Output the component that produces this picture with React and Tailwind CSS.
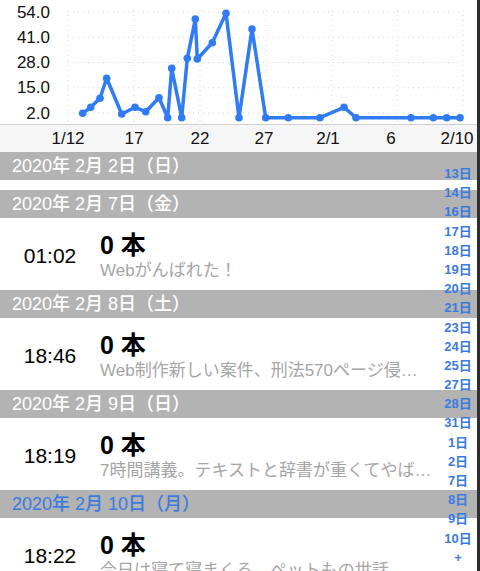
const BLUE = "#2f7cf4";

const points = [
  [82.7, 113.3], [90.7, 107.3], [100, 98.3], [106.7, 78.3], [121.7, 114],
  [135, 107.3], [145.7, 111.7], [159, 97.7], [167.7, 117.7], [171.7, 68.3],
  [181.7, 117.7], [187.3, 58.3], [195.3, 19], [197.3, 59], [212.3, 42.7],
  [226, 13.3], [239, 117.7], [252, 29], [265.7, 117.7], [288.3, 117.7],
  [320, 117.7], [344, 107.3], [356, 117.7], [411, 117.7], [433.3, 117.7],
  [446.7, 117.7], [460, 117.7],
];

const yTicks = [
  ["54.0", 12],
  ["41.0", 37.3],
  ["28.0", 62.5],
  ["15.0", 87.8],
  ["2.0", 113],
];

const xTicks = [
  ["1/12", 68],
  ["17", 134],
  ["22", 200],
  ["27", 264],
  ["2/1", 328],
  ["6", 391],
  ["2/10", 457],
];

const gridX = [68, 134, 200, 266, 332, 397, 463];

function Chart() {
  return (
    <svg width="477" height="152" className="block">
      <rect x="0" y="0" width="477" height="124" fill="#ffffff" />
      <rect x="0" y="124" width="477" height="28" fill="#f6f6f6" />
      <line x1="0" y1="124.5" x2="477" y2="124.5" stroke="#cfcfcf" strokeWidth="1" />
      {gridX.map((x) => (
        <line key={x} x1={x} y1="10" x2={x} y2="124" stroke="#d4d4d4" strokeWidth="1" strokeDasharray="1 4" />
      ))}
      {yTicks.map(([, y]) => (
        <line key={y} x1="68" y1={y} x2="463" y2={y} stroke="#d4d4d4" strokeWidth="1" strokeDasharray="1 4" />
      ))}
      {yTicks.map(([label, y]) => (
        <text key={label} x="50" y={y} textAnchor="end" dominantBaseline="central" fontSize="17" fill="#111">
          {label}
        </text>
      ))}
      {xTicks.map(([label, x]) => (
        <text key={label} x={x} y="138" textAnchor="middle" dominantBaseline="central" fontSize="17" fill="#111">
          {label}
        </text>
      ))}
      <polyline
        points={points.map((p) => p.join(",")).join(" ")}
        fill="none"
        stroke={BLUE}
        strokeWidth="3.5"
        strokeLinejoin="round"
        strokeLinecap="round"
      />
      {points.map(([x, y], i) => (
        <circle key={i} cx={x} cy={y} r="3.8" fill={BLUE} />
      ))}
    </svg>
  );
}

function Header({ children, active }) {
  return (
    <div
      className={`h-[28px] bg-[#b3b3b3] px-3 flex items-center text-[18px] font-medium ${
        active ? "text-[#3a7be0]" : "text-white"
      }`}
    >
      {children}
    </div>
  );
}

function Row({ time, note }) {
  return (
    <div className="h-[72px] bg-white flex items-center pt-[3px]">
      <div className="w-[100px] text-center text-[21px] text-black">{time}</div>
      <div className="w-[334px] flex flex-col">
        <div className="text-[25px] font-bold leading-[30px] text-black">0 本</div>
        <div className="text-[17px] leading-[22px] text-[#a5a5a5] truncate">{note}</div>
      </div>
    </div>
  );
}

const index = [
  "13日", "14日", "16日", "17日", "18日", "19日", "20日", "21日", "23日", "24日",
  "25日", "27日", "28日", "31日", "1日", "2日", "7日", "8日", "9日", "10日", "+",
];

export default function App() {
  return (
    <div className="relative w-[480px] h-[571px] overflow-hidden bg-white font-['Liberation_Sans','Noto_Sans_CJK_JP',sans-serif]">
      <div className="flex">
        <div className="w-[477px]">
          <Chart />
          <Header>2020年 2月 2日（日）</Header>
          <div className="h-[10px] bg-white" />
          <Header>2020年 2月 7日（金）</Header>
          <Row time="01:02" note="Webがんばれた！" />
          <Header>2020年 2月 8日（土）</Header>
          <Row time="18:46" note="Web制作新しい案件、刑法570ページ侵入罪まで読了" />
          <Header>2020年 2月 9日（日）</Header>
          <Row time="18:19" note="7時間講義。テキストと辞書が重くてやばい。明日も" />
          <Header active>2020年 2月 10日（月）</Header>
          <Row time="18:22" note="今日は寝て寝まくる。ペットもの世話" />
        </div>
        <div className="w-[3px] bg-[#2e2e2e]" />
      </div>
      <div className="absolute top-[164px] right-[6px] w-[32px] flex flex-col items-center">
        {index.map((d) => (
          <div key={d} className="h-[19.2px] leading-[19.2px] text-[13px] font-semibold text-[#3a7be0]">
            {d}
          </div>
        ))}
      </div>
    </div>
  );
}
